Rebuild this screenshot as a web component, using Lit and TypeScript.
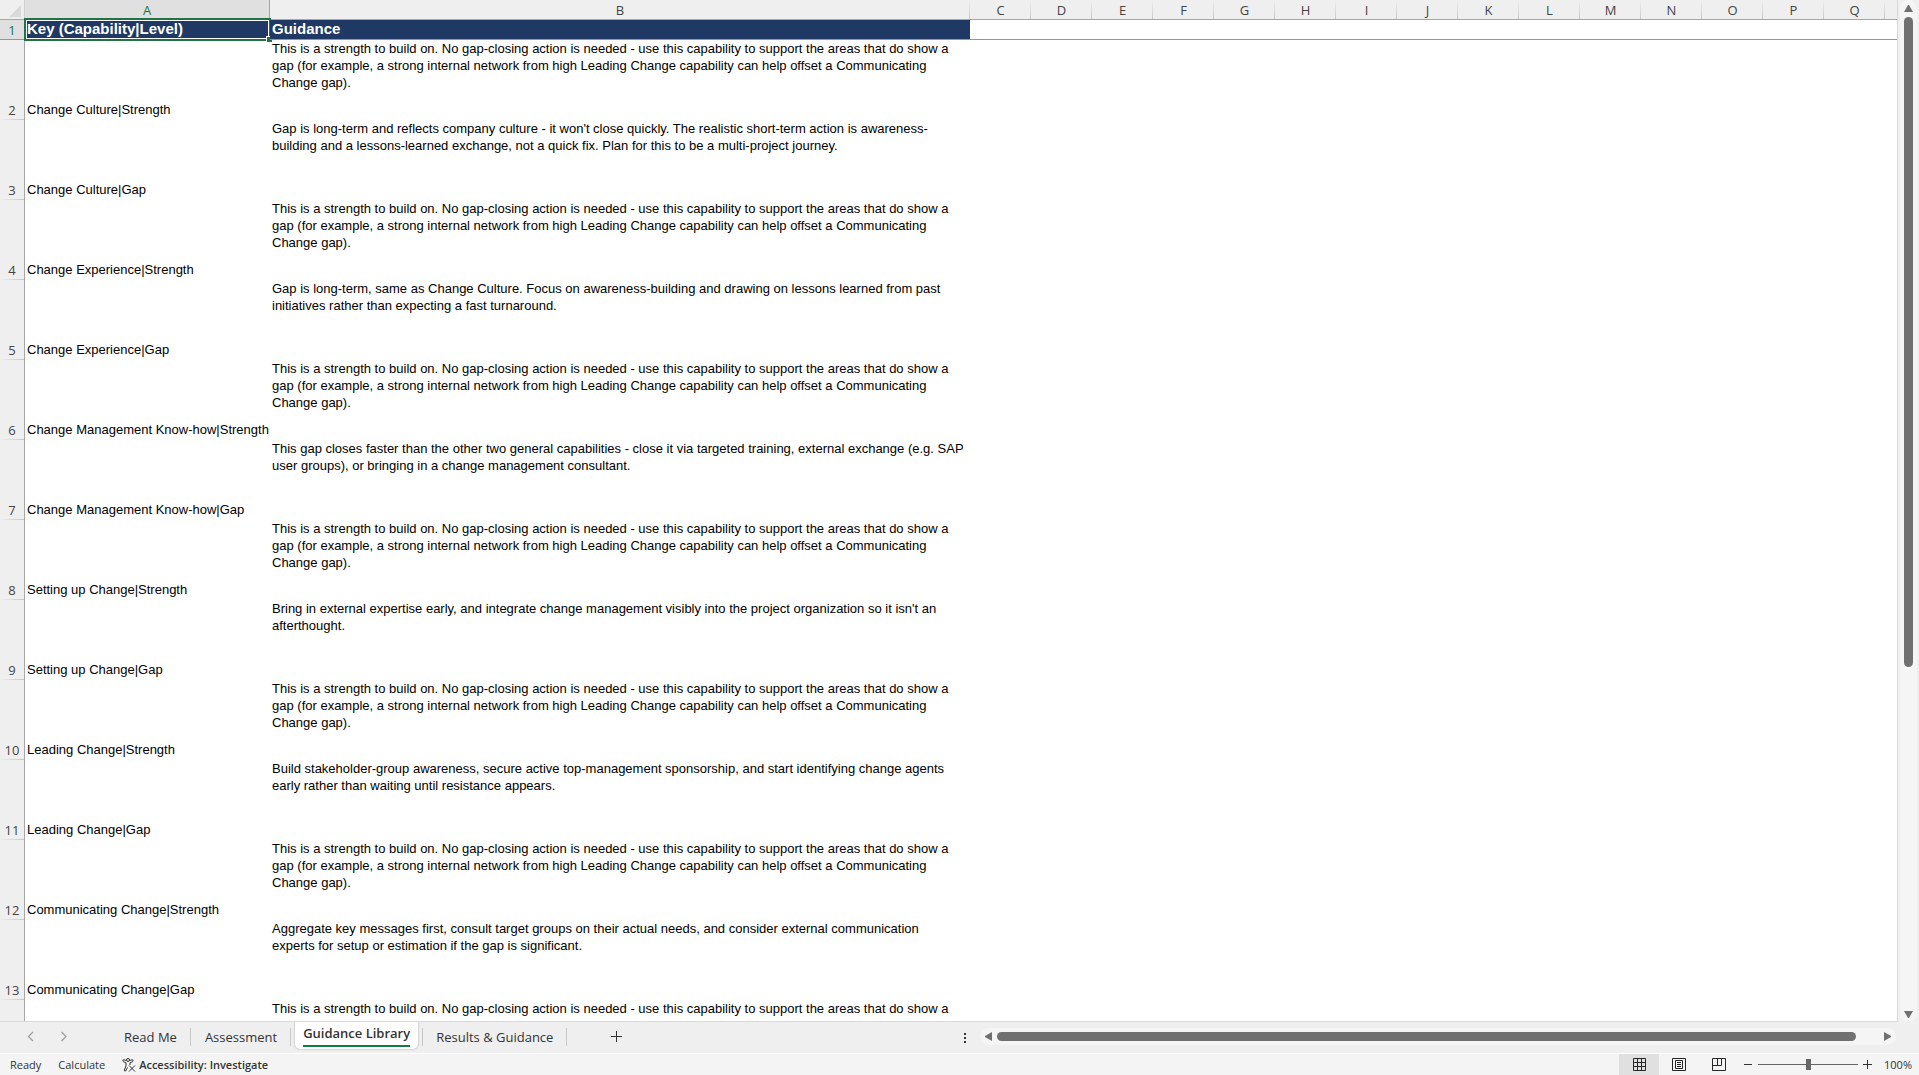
import { LitElement, html, css } from "lit";
import { customElement, property } from "lit/decorators.js";

interface Entry { key: string; text: string; }

const STRENGTH_START =
  "This is a strength to build on. No gap-closing action is needed - use this capability to support the areas that do show a\ngap (for example, a strong internal network from high Leading Change capability can help offset a Communicating";
const STRENGTH = STRENGTH_START + "\nChange gap).";

const ENTRIES: Entry[] = [
  { key: "Change Culture|Strength", text: STRENGTH },
  { key: "Change Culture|Gap", text: "Gap is long-term and reflects company culture - it won't close quickly. The realistic short-term action is awareness-\nbuilding and a lessons-learned exchange, not a quick fix. Plan for this to be a multi-project journey." },
  { key: "Change Experience|Strength", text: STRENGTH },
  { key: "Change Experience|Gap", text: "Gap is long-term, same as Change Culture. Focus on awareness-building and drawing on lessons learned from past\ninitiatives rather than expecting a fast turnaround." },
  { key: "Change Management Know-how|Strength", text: STRENGTH },
  { key: "Change Management Know-how|Gap", text: "This gap closes faster than the other two general capabilities - close it via targeted training, external exchange (e.g. SAP\nuser groups), or bringing in a change management consultant." },
  { key: "Setting up Change|Strength", text: STRENGTH },
  { key: "Setting up Change|Gap", text: "Bring in external expertise early, and integrate change management visibly into the project organization so it isn't an\nafterthought." },
  { key: "Leading Change|Strength", text: STRENGTH },
  { key: "Leading Change|Gap", text: "Build stakeholder-group awareness, secure active top-management sponsorship, and start identifying change agents\nearly rather than waiting until resistance appears." },
  { key: "Communicating Change|Strength", text: STRENGTH },
  { key: "Communicating Change|Gap", text: "Aggregate key messages first, consult target groups on their actual needs, and consider external communication\nexperts for setup or estimation if the gap is significant." },
  { key: "", text: STRENGTH_START },
];

const EXTRA_COLUMNS = "CDEFGHIJKLMNOPQ".split("");

@customElement("sheet-grid")
export class SheetGrid extends LitElement {
  @property({ attribute: false }) entries: Entry[] = [];

  static styles = css`
    :host { display: block; overflow: hidden; min-width: 0; min-height: 0; background: #fff; border-right: 1px solid #d9d9d9; border-bottom: 1px solid #d9d9d9; }
    table { width: 100%; table-layout: fixed; border-collapse: separate; border-spacing: 0; }
    th, td { padding: 0; font-weight: 400; text-align: left; box-sizing: border-box; }
    .c-num { width: 25px; }
    .c-key { width: 245px; }
    .c-guide { width: 700px; }
    .c-extra { width: 61px; }
    .letters th {
      height: 20px; border-bottom: 1px solid #a6a6a6; color: #444; text-align: center;
      font: 13px/18px "Open Sans", "Noto Sans", sans-serif;
      background: linear-gradient(to bottom, #efefef, #c6c6c6) right / 1px 100% no-repeat, #efefef;
    }
    .letters .tail { background: #efefef; }
    .letters .corner { background: #efefef; border-right: 1px solid #d0d0d0; }
    .corner svg { display: block; margin-left: 3px; }
    .letters .active { color: #217346; background: #e0e0e0; border-right: 1px solid #a6a6a6; }
    .num {
      color: #444; text-align: center; vertical-align: bottom;
      font: 13px/18px "Open Sans", "Noto Sans", sans-serif;
      border-right: 1px solid #a6a6a6;
      background: linear-gradient(to right, #efefef, #c6c6c6) bottom / 100% 1px no-repeat, #efefef;
    }
    .row .num { padding-bottom: 1px; }
    .titles .num { height: 20px; color: #217346; background: #e0e0e0; border-bottom: 1px solid #979797; }
    .titles .title {
      position: relative; height: 20px; padding-left: 2px; border-bottom: 1px solid #979797; vertical-align: top;
      background: #203864; color: #fff; font: bold 15px/18px "Liberation Sans", Arial, sans-serif;
    }
    .titles .blank { height: 20px; border-bottom: 1px solid #979797; }
    .selection { position: absolute; inset: -2px -1px -2px -1px; border: 2px solid #217346; box-shadow: inset 0 0 0 1px #fff; }
    .handle { position: absolute; right: -3px; bottom: -3px; width: 6px; height: 6px; background: #217346; border: 1px solid #fff; border-width: 1px 0 0 1px; box-sizing: border-box; }
    .row td, .row .num { height: 80px; }
    .key, .guide { color: #000; padding-left: 2px; font: 13px/17px "Liberation Sans", Arial, sans-serif; }
    .key { vertical-align: bottom; padding-bottom: 2px; white-space: nowrap; }
    .guide { vertical-align: top; white-space: pre-line; }
  `;

  render() {
    return html`
      <table>
        <colgroup>
          <col class="c-num" /><col class="c-key" /><col class="c-guide" />
          ${EXTRA_COLUMNS.map(() => html`<col class="c-extra" />`)}
          <col />
        </colgroup>
        <thead>
          <tr class="letters">
            <th class="corner">
              <svg width="18" height="18" viewBox="0 0 18 18"><path d="M18 4V16H6Z" fill="#dadada" /></svg>
            </th>
            <th class="active">A</th>
            <th>B</th>
            ${EXTRA_COLUMNS.map((c) => html`<th>${c}</th>`)}
            <th class="tail"></th>
          </tr>
          <tr class="titles">
            <th class="num">1</th>
            <th class="title">Key (Capability|Level)<span class="selection"><span class="handle"></span></span></th>
            <th class="title">Guidance</th>
            <td class="blank" colspan="16"></td>
          </tr>
        </thead>
        <tbody>
          ${this.entries.map((e, i) => html`
            <tr class="row">
              <th class="num">${e.key ? i + 2 : ""}</th>
              <td class="key">${e.key}</td>
              <td class="guide">${e.text}</td>
              <td colspan="16"></td>
            </tr>`)}
        </tbody>
      </table>
    `;
  }
}

@customElement("sheet-tabs")
export class SheetTabs extends LitElement {
  static styles = css`
    :host { display: flex; align-items: stretch; min-width: 0; height: 31px; background: #efefef; font: 13px/20px "Open Sans", "Noto Sans", sans-serif; color: #333; }
    button { border: 0; background: none; padding: 0; margin: 0; font: inherit; color: inherit; display: flex; align-items: center; justify-content: center; }
    .nav { display: flex; width: 110px; padding: 0 0 2px 14px; box-sizing: border-box; }
    .nav button { width: 33px; }
    .tabs { display: flex; }
    .tab { padding: 0 14px 1px; position: relative; white-space: nowrap; }
    .divided::after, .opened::before { content: ""; position: absolute; right: 0; top: 6px; bottom: 7px; width: 1px; background: #c8c8c8; }
    .opened::before { right: auto; left: 0; }
    .current { margin: 0 4px; padding: 0 8px; align-items: flex-start; background: #fff; font-weight: 600; border-radius: 0 0 5px 5px; height: 27px; box-shadow: 0 0 2px #999; clip-path: inset(0 -3px -3px -3px); }
    .current span { border-bottom: 2px solid #107c41; line-height: 23px; }
    .add { width: 97px; padding: 0 0 2px 2px; }
    .space { flex: 1; }
    .more { width: 30px; }
    .track { display: flex; align-items: center; width: 916px; height: 17px; margin: 6px 0 8px; border-radius: 9px; background: #f5f5f5; }
    .track button { width: 17px; }
    .thumb { flex: 1; height: 9px; border-radius: 5px; background: #707070; }
    .rest { width: 23px; }
  `;

  render() {
    return html`
      <div class="nav">
        <button aria-label="Previous sheet"><svg width="8" height="12" viewBox="0 0 8 12"><path d="M6 1L1.500 5.500 6 10" fill="none" stroke="#a0a0a0" stroke-width="1.300" /></svg></button>
        <button aria-label="Next sheet"><svg width="8" height="12" viewBox="0 0 8 12"><path d="M1.500 1L6 5.500 1.500 10" fill="none" stroke="#a0a0a0" stroke-width="1.300" /></svg></button>
      </div>
      <div class="tabs">
        <button class="tab divided">Read Me</button>
        <button class="tab divided">Assessment</button>
        <button class="tab current"><span>Guidance Library</span></button>
        <button class="tab divided opened">Results &amp; Guidance</button>
      </div>
      <button class="add" aria-label="New sheet"><svg width="11" height="11" viewBox="0 0 11 11"><path d="M0 5.500H11M5.500 0V11" stroke="#333" /></svg></button>
      <div class="space"></div>
      <button class="more" aria-label="Resize tabs"><svg width="2" height="10" viewBox="0 0 2 10"><path d="M0 0H2V2H0ZM0 4H2V6H0ZM0 8H2V10H0Z" fill="#333" /></svg></button>
      <div class="track">
        <button aria-label="Scroll left"><svg width="9" height="9" viewBox="0 0 9 9"><path d="M8 0V9L1 5V4Z" fill="#707070" /></svg></button>
        <div class="thumb"></div><div class="rest"></div>
        <button aria-label="Scroll right"><svg width="9" height="9" viewBox="0 0 9 9"><path d="M1 0V9L8 5V4Z" fill="#707070" /></svg></button>
      </div>
    `;
  }
}

@customElement("status-bar")
export class StatusBar extends LitElement {
  static styles = css`
    :host { display: flex; align-items: stretch; height: 21px; background: #f4f4f4; border-top: 1px solid #fff; font: 11px/20px "Open Sans", "Noto Sans", sans-serif; color: #333; }
    button { border: 0; background: none; padding: 0; margin: 0; font: inherit; color: inherit; display: flex; align-items: center; justify-content: center; }
    .left { display: flex; align-items: center; gap: 17px; padding-left: 10px; flex: 1; }
    .access { gap: 3px; font-weight: 600; }
    .view { width: 40px; }
    .on { background: #e0e0e0; }
    .step { width: 19px; }
    input { appearance: none; width: 100px; height: 21px; margin: 0; background: linear-gradient(#666, #666) center / 100% 1px no-repeat; }
    input::-webkit-slider-thumb { appearance: none; width: 5px; height: 11px; background: #666; }
    .zoom { width: 42px; }
  `;

  render() {
    return html`
      <div class="left">
        <span>Ready</span>
        <span>Calculate</span>
        <button class="access">
          <svg width="14" height="14" viewBox="0 0 14 14" fill="none" stroke="#333"><circle cx="6" cy="2" r="1.500" /><path d="M4.500 2.500L2 1.800Q.6 1.800 .8 3Q1 3.800 4 4.800V8L2.300 12.200Q2.500 13.500 3.600 13L5.500 9.500M7.500 2.500L10 1.800Q11.400 1.800 11.200 3Q11 3.800 8 4.800V7M7 7.500L13 13.500M13 7.500L7 13.500" /></svg>
          Accessibility: Investigate
        </button>
      </div>
      <button class="view on" aria-label="Normal view"><svg width="13" height="13" viewBox="0 0 13 13"><path d="M.5 .5H12.500V12.500H.5ZM.5 4.500H12.500M.5 8.500H12.500M4.500 .5V12.500M8.500 .5V12.500" fill="none" stroke="#262626" /></svg></button>
      <button class="view" aria-label="Page layout"><svg width="14" height="13" viewBox="0 0 14 13"><path d="M.5 .5H13.500V12.500H.5ZM3.500 2.500H10.500V10.500H3.500ZM5 4.500H9M5 6.500H9M5 8.500H9" fill="none" stroke="#262626" /></svg></button>
      <button class="view" aria-label="Page break preview"><svg width="14" height="13" viewBox="0 0 14 13"><path d="M.5 .5H13.500V12.500H.5ZM.5 7.500H9.500V.5M5.500 .5V7.500" fill="none" stroke="#262626" /></svg></button>
      <button class="step" aria-label="Zoom out"><svg width="9" height="9" viewBox="0 0 9 9"><path d="M0 4.500H8" stroke="#333" /></svg></button>
      <input type="range" min="0" max="200" value="100" aria-label="Zoom" />
      <button class="step" aria-label="Zoom in"><svg width="9" height="9" viewBox="0 0 9 9"><path d="M0 4.500H9M4.500 0V9" stroke="#333" /></svg></button>
      <button class="zoom">100%</button>
    `;
  }
}

@customElement("app-root")
export class AppRoot extends LitElement {
  static styles = css`
    :host { display: flex; flex-direction: column; height: 100vh; overflow: hidden; background: #efefef; }
    .main { flex: 1; min-height: 0; display: flex; }
    sheet-grid { flex: 1; }
    .rail { display: flex; flex-direction: column; align-items: center; width: 17px; margin: 0 2px; border-radius: 9px; background: #f5f5f5; }
    .rail button { border: 0; background: none; padding: 0; width: 17px; height: 17px; display: flex; align-items: center; justify-content: center; }
    .thumb { width: 9px; flex: 651; border-radius: 5px; background: #707070; }
    .rest { flex: 338; }
    .bottom { display: flex; }
    sheet-tabs { flex: 1; padding-right: 23px; }
  `;

  render() {
    return html`
      <div class="main">
        <sheet-grid .entries=${ENTRIES}></sheet-grid>
        <div class="rail">
          <button aria-label="Scroll up"><svg width="9" height="8" viewBox="0 0 9 8"><path d="M4 0H5L9 7H0Z" fill="#707070" /></svg></button>
          <div class="thumb"></div>
          <div class="rest"></div>
          <button aria-label="Scroll down"><svg width="9" height="8" viewBox="0 0 9 8"><path d="M0 1H9L5 8H4Z" fill="#707070" /></svg></button>
        </div>
      </div>
      <div class="bottom"><sheet-tabs></sheet-tabs></div>
      <status-bar></status-bar>
    `;
  }
}
